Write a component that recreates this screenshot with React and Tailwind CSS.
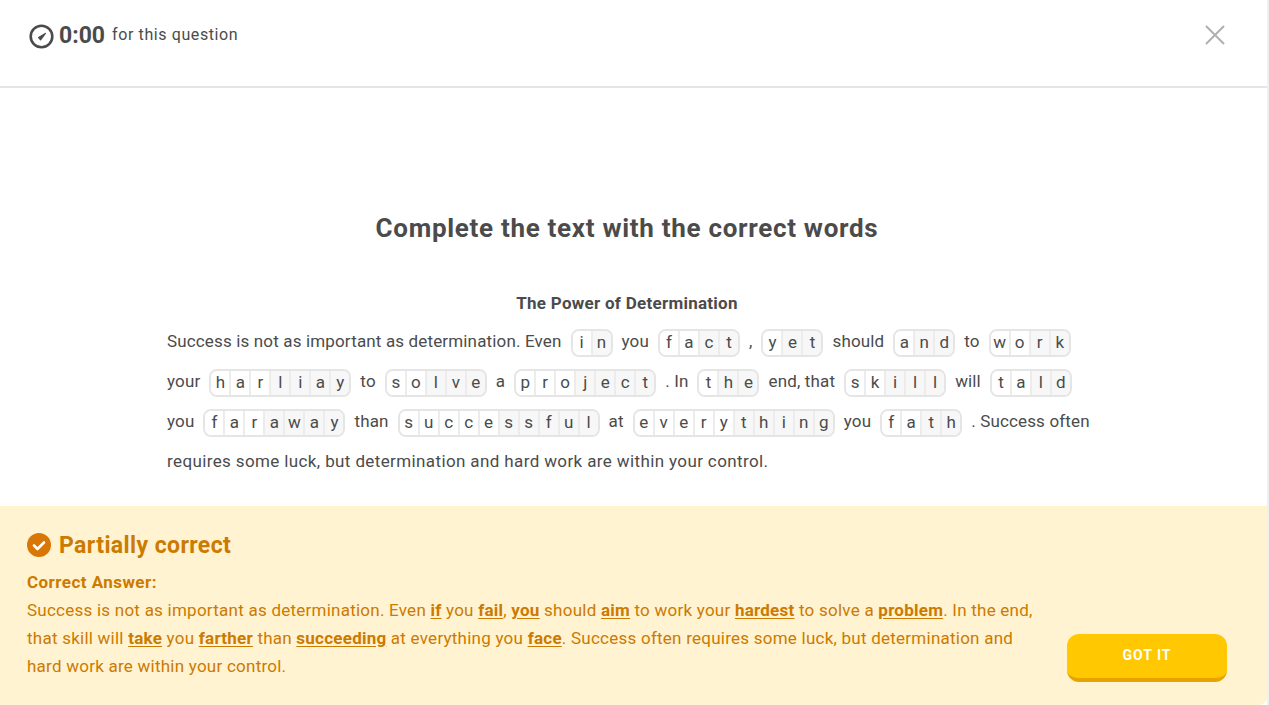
const typeface = { fontFamily: '"Roboto", "Liberation Sans", sans-serif' };

// one fill-in word, the first half of the letters sit on white
function Blank({ word }) {
  const given = Math.floor(word.length / 2);
  return (
    <span className="inline-flex h-[28px] align-middle mx-[9px] rounded-lg border-2 border-[#e5e5e5] overflow-hidden bg-white">
      {word.split("").map((letter, i) => (
        <span
          key={i}
          className={`flex items-center justify-center text-[17px] leading-none tracking-normal text-[#4b4b4b] ${i === 0 ? "w-[18px]" : "w-[20px] border-l-2 border-[#ececec]"} ${i < given ? "bg-white" : "bg-[#f7f7f7]"}`}
        >
          {letter}
        </span>
      ))}
    </span>
  );
}

function Answer({ children }) {
  return <span className="font-bold underline underline-offset-2">{children}</span>;
}

export default function App() {
  return (
    <div style={typeface} className="h-[705px] w-full flex flex-col bg-white border-r-2 border-[#f0f0f0] overflow-hidden">
      {/* Header */}
      <header className="h-[88px] shrink-0 border-b-2 border-[#e5e5e5] flex items-center justify-between pl-[29px] pr-[41px] pb-[16px]">
        <div className="flex items-center text-[#4b4b4b]">
          <svg width="25" height="25" viewBox="0 0 25 25" className="mt-[3px]">
            <circle cx="12.5" cy="12.5" r="10.8" fill="none" stroke="#4b4b4b" strokeWidth="2.6" />
            <path d="M9.6 13.6 L16.4 9.4 L11.6 15.8 Z" fill="#4b4b4b" stroke="#4b4b4b" strokeWidth="1.2" strokeLinejoin="round" />
          </svg>
          <span className="ml-[5px] text-[23px] font-bold leading-none">0:00</span>
          <span className="ml-[7px] text-[16px] tracking-[0.6px]">for this question</span>
        </div>
        <svg width="22" height="22" viewBox="0 0 22 22" stroke="#afafaf" strokeWidth="2" fill="none">
          <path d="M2 2 L20 20 M20 2 L2 20" />
        </svg>
      </header>

      {/* Question */}
      <main className="flex-1 flex flex-col items-center text-[#4b4b4b]">
        <h1 className="mt-[124px] text-[26px] leading-[32px] font-bold tracking-[0.7px] pr-[13px]">Complete the text with the correct words</h1>
        <h2 className="mt-[47px] text-[17px] leading-[24px] font-bold tracking-[0.27px] pr-[13px]">The Power of Determination</h2>
        <p className="mt-[6px] w-[934px] ml-[1px] text-[17px] leading-[40px] tracking-[0.15px]">
          Success is not as important as determination. Even<Blank word="in" />you<Blank word="fact" />,<Blank word="yet" />should<Blank word="and" />to<Blank word="work" />
          your<Blank word="harliay" />to<Blank word="solve" />a<Blank word="project" />. In<Blank word="the" />end, that<Blank word="skill" />will<Blank word="tald" />
          you<Blank word="faraway" />than<Blank word="successful" />at<Blank word="everything" />you<Blank word="fath" />. Success often <span className="tracking-[0.38px]">requires some luck, but determination and hard work are within your control.</span>
        </p>
      </main>

      {/* Result */}
      <footer className="h-[199px] shrink-0 bg-[#fff3d1] rounded-br-lg text-[#cc7a00] pl-[27px] pr-[40px] pt-[27px] flex justify-between">
        <div className="w-[1010px]">
          <div className="flex items-center h-[24px]">
            <svg width="24" height="24" viewBox="0 0 24 24">
              <circle cx="12" cy="12" r="12" fill="#d97706" />
              <path d="M7 12.5 L10.5 16 L17 9.5" fill="none" stroke="#fff" strokeWidth="2.6" strokeLinecap="round" strokeLinejoin="round" />
            </svg>
            <span className="ml-[8px] text-[23px] font-bold leading-none tracking-[0.4px]">Partially correct</span>
          </div>
          <div className="mt-[13px] text-[17px] leading-[24px] font-bold tracking-[0.45px]">Correct Answer:</div>
          <p className="mt-[2px] text-[17px] leading-[28px] tracking-[0.24px]">
            Success is not as important as determination. Even <Answer>if</Answer> you <Answer>fail</Answer>, <Answer>you</Answer> should <Answer>aim</Answer> to work your <Answer>hardest</Answer> to solve a <Answer>problem</Answer>. In the end, that skill will <Answer>take</Answer> you <Answer>farther</Answer> than <Answer>succeeding</Answer> at everything you <Answer>face</Answer>. Success often requires some luck, but determination and hard work are within your control.
          </p>
        </div>
        <button className="self-start mt-[101px] w-[160px] h-[48px] rounded-xl bg-[#ffc800] border-b-[4px] border-[#e5a400] text-white text-[14px] font-bold tracking-[1px] pb-[1px]">
          GOT IT
        </button>
      </footer>
    </div>
  );
}
